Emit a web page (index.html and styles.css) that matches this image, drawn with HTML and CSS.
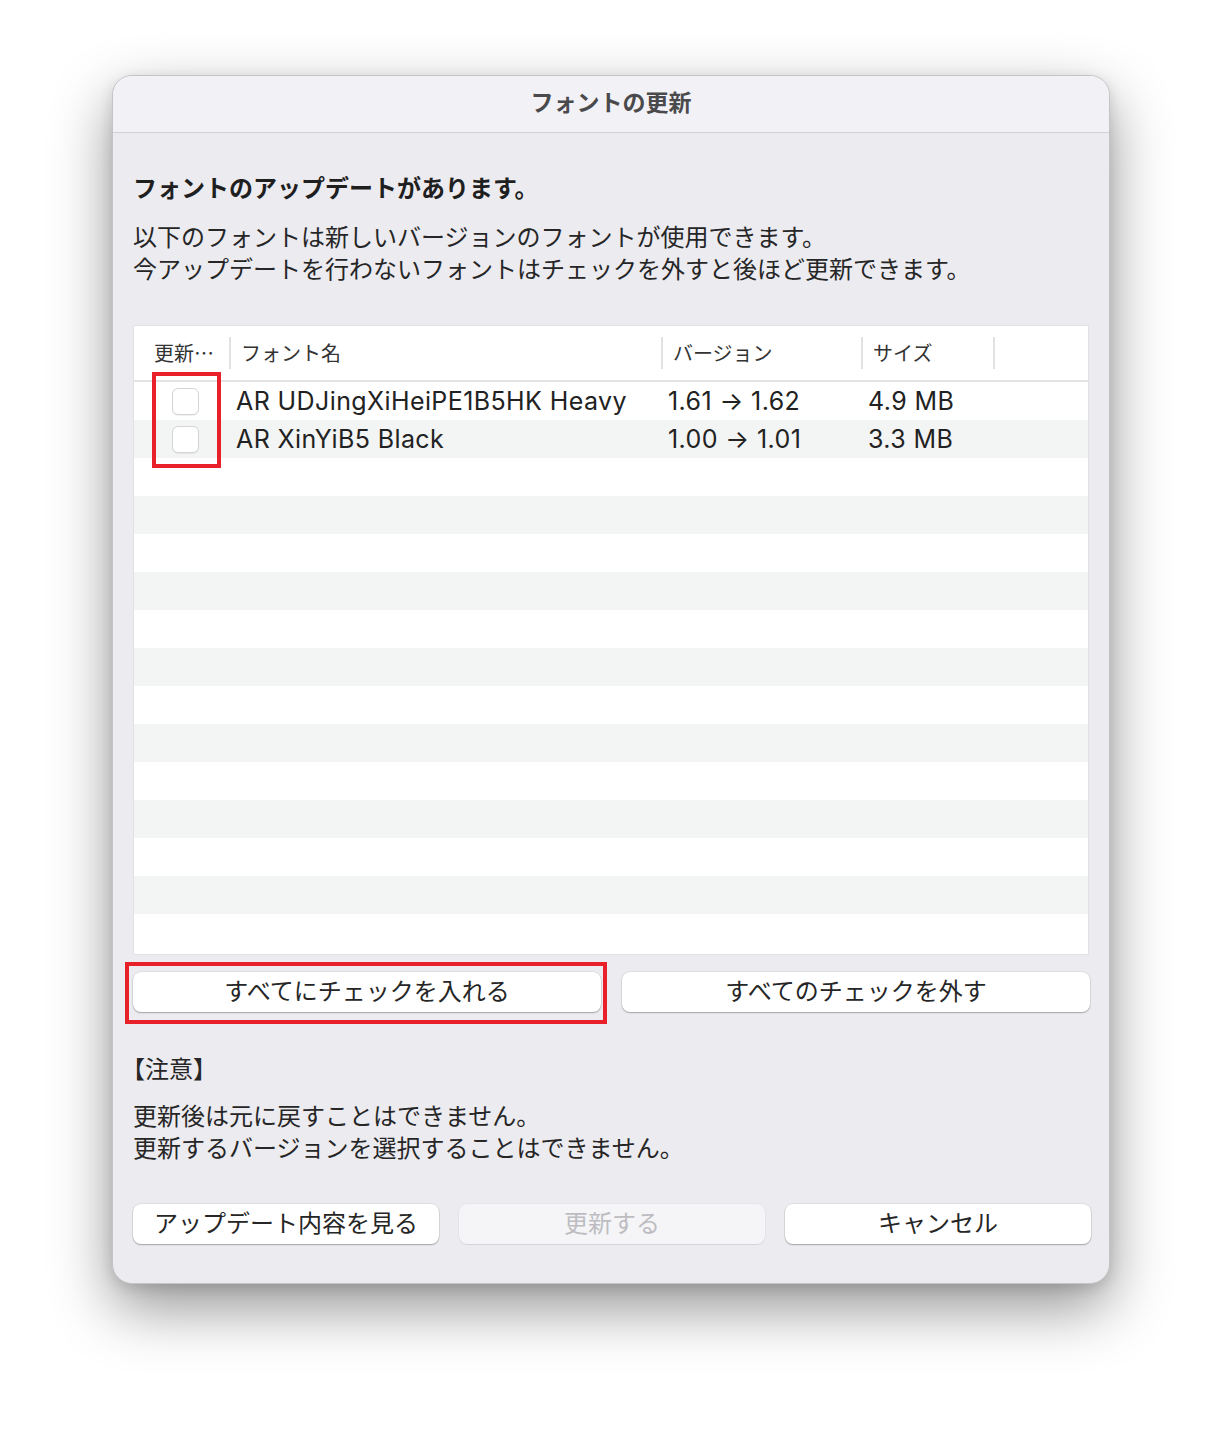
FILE: index.html
```html
<!DOCTYPE html>
<html lang="ja">
<head>
<meta charset="utf-8">
<title>フォントの更新</title>
<link rel="stylesheet" href="styles.css">
</head>
<body>
<div class="window">
  <div class="titlebar">フォントの更新</div>
  <div class="content">
    <h1 class="heading">フォントのアップデートがあります。</h1>
    <p class="desc">以下のフォントは新しいバージョンのフォントが使用できます。<br>今アップデートを行わないフォントはチェックを外すと後ほど更新できます。</p>

    <div class="table">
      <div class="thead">
        <div class="th th-check">更新…</div>
        <div class="th">フォント名</div>
        <div class="th">バージョン</div>
        <div class="th">サイズ</div>
        <div class="th th-last"></div>
      </div>
      <div class="tbody">
        <div class="mark-checks"></div>
        <div class="row">
          <div class="td td-check"><span class="checkbox"></span></div>
          <div class="td latin">AR UDJingXiHeiPE1B5HK Heavy</div>
          <div class="td latin">1.61 → 1.62</div>
          <div class="td latin">4.9 MB</div>
          <div class="td"></div>
        </div>
        <div class="row">
          <div class="td td-check"><span class="checkbox"></span></div>
          <div class="td latin">AR XinYiB5 Black</div>
          <div class="td latin">1.00 → 1.01</div>
          <div class="td latin">3.3 MB</div>
          <div class="td"></div>
        </div>
        <div class="row"></div>
        <div class="row"></div>
        <div class="row"></div>
        <div class="row"></div>
        <div class="row"></div>
        <div class="row"></div>
        <div class="row"></div>
        <div class="row"></div>
        <div class="row"></div>
        <div class="row"></div>
        <div class="row"></div>
        <div class="row"></div>
        <div class="row"></div>
      </div>
    </div>

    <div class="check-buttons">
      <div class="btn-wrap">
        <button class="btn">すべてにチェックを入れる</button>
        <div class="mark-button"></div>
      </div>
      <button class="btn">すべてのチェックを外す</button>
    </div>

    <div class="note-title">【注意】</div>
    <p class="note">更新後は元に戻すことはできません。<br>更新するバージョンを選択することはできません。</p>

    <div class="actions">
      <button class="btn">アップデート内容を見る</button>
      <button class="btn btn-disabled" disabled>更新する</button>
      <button class="btn">キャンセル</button>
    </div>
  </div>
</div>
</body>
</html>
```

FILE: styles.css
```css
* { box-sizing: border-box; }

html, body {
  margin: 0;
  background: #ffffff;
}

body {
  min-height: 1432px;
  padding: 75px 0 0 112px;
  font-family: "Noto Sans CJK JP", "Noto Sans", sans-serif;
  color: #262626;
}

.window {
  width: 998px;
  height: 1209px;
  border-radius: 20px;
  background: #ecebf0;
  border: 1px solid #c4c4c6;
  box-shadow: 0 24px 60px rgba(0, 0, 0, 0.42), 0 4px 14px rgba(0, 0, 0, 0.12);
  overflow: hidden;
  display: flex;
  flex-direction: column;
}

.titlebar {
  height: 57px;
  flex: none;
  background: #f2f1f6;
  border-bottom: 1px solid #d2d1d6;
  display: flex;
  align-items: center;
  justify-content: center;
  font-size: 23px;
  font-weight: 700;
  color: #4a4a4c;
  padding-bottom: 6px;
}

.content {
  padding: 38px 20px 0 20px;
  display: flex;
  flex-direction: column;
}

.heading {
  margin: 0;
  font-size: 24px;
  line-height: 32px;
  font-weight: 700;
  color: #1f1f1f;
}

.desc {
  margin: 17px 0 0 0;
  font-size: 24px;
  line-height: 32px;
  color: #262626;
}

.table {
  margin-top: 41px;
  height: 630px;
  background: #ffffff;
  border: 1px solid #e1e1e3;
  display: flex;
  flex-direction: column;
}

.thead {
  height: 56px;
  flex: none;
  display: grid;
  grid-template-columns: 95px 432px 200px 132px 1fr;
  align-items: center;
  border-bottom: 2px solid #e4e4e6;
}

.th {
  height: 32px;
  display: flex;
  align-items: center;
  padding-left: 10px;
  padding-bottom: 1px;
  font-size: 20px;
  color: #333333;
  border-left: 2px solid #e2e2e4;
}

.th-check {
  border-left: none;
  padding-left: 20px;
}

.tbody {
  position: relative;
  flex: 1;
}

.row {
  height: 38px;
  display: grid;
  grid-template-columns: 95px 432px 200px 132px 1fr;
  align-items: center;
}

.row:nth-child(odd) {
  background: #f3f4f4;
}

.row:nth-child(even) {
  background: #ffffff;
}

.td {
  padding-left: 7px;
  font-size: 24px;
  color: #222222;
  white-space: nowrap;
}

.latin {
  font-family: "Inter", "Liberation Sans", sans-serif;
  font-size: 25px;
  letter-spacing: 0.4px;
  line-height: 30px;
}

.td-check {
  display: flex;
  padding-left: 38px;
}

.checkbox {
  width: 27px;
  height: 27px;
  border-radius: 6px;
  background: #ffffff;
  border: 1px solid #d4d4d6;
  box-shadow: 0 1px 1px rgba(0, 0, 0, 0.06);
}

.mark-checks {
  position: absolute;
  left: 18px;
  top: -10px;
  width: 69px;
  height: 96px;
  border: 4px solid #e8202a;
  z-index: 2;
}

.check-buttons {
  margin-top: 17px;
  display: grid;
  grid-template-columns: 468px 468px;
  gap: 21px;
}

.btn-wrap {
  position: relative;
  display: flex;
}

.btn {
  height: 40px;
  width: 100%;
  border: none;
  border-radius: 8px;
  background: #ffffff;
  box-shadow: 0 1px 1.5px rgba(0, 0, 0, 0.28), 0 0 0 0.5px rgba(0, 0, 0, 0.1);
  font-family: "Noto Sans CJK JP", sans-serif;
  font-size: 24px;
  line-height: 32px;
  color: #262626;
  padding: 0 0 5px 0;
  margin: 0;
}

.btn-disabled {
  background: #f5f5f8;
  color: #bdbdc1;
  box-shadow: 0 1px 1px rgba(0, 0, 0, 0.08), 0 0 0 0.5px rgba(0, 0, 0, 0.05);
}

.mark-button {
  position: absolute;
  left: -8px;
  top: -10px;
  width: 482px;
  height: 62px;
  border: 4px solid #e8202a;
}

.note-title {
  margin-top: 40px;
  margin-left: -12px;
  font-size: 24px;
  line-height: 32px;
  color: #262626;
}

.note {
  margin: 15px 0 0 0;
  font-size: 24px;
  line-height: 32px;
  color: #262626;
}

.actions {
  margin-top: 41px;
  display: grid;
  grid-template-columns: 306px 306px 306px;
  gap: 20px;
}
```
